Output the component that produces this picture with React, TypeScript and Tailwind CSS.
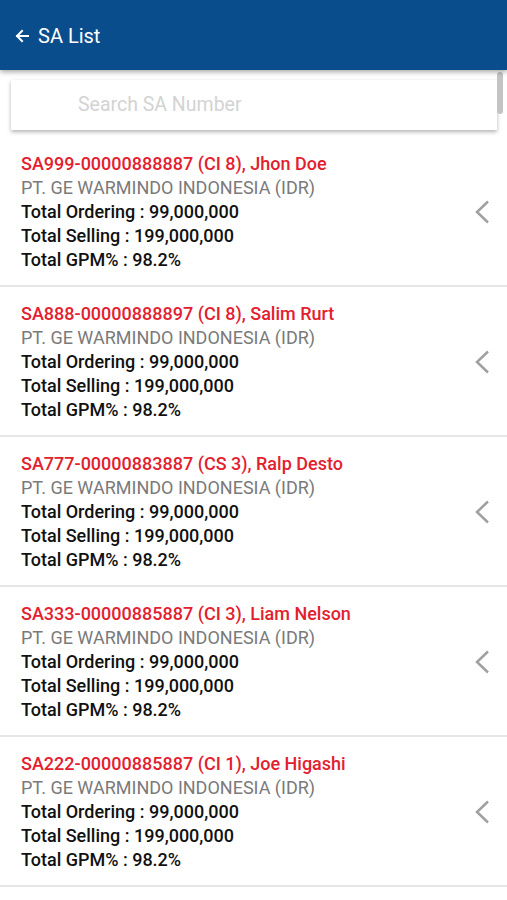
import React from "react";

const items = [
  { id: "SA999-00000888887 (CI 8), Jhon Doe" },
  { id: "SA888-00000888897 (CI 8), Salim Rurt" },
  { id: "SA777-00000883887 (CS 3), Ralp Desto" },
  { id: "SA333-00000885887 (CI 3), Liam Nelson" },
  { id: "SA222-00000885887 (CI 1), Joe Higashi" },
];

export default function App() {
  return (
    <div
      className="relative w-[507px] h-[900px] overflow-hidden bg-white"
      style={{ fontFamily: "Roboto, 'Liberation Sans', sans-serif" }}
    >
      <div className="relative z-10 h-[70px] bg-[#0a4d8d] flex items-center pl-[14px] shadow-[0_2px_5px_rgba(0,0,0,0.35)]">
        <svg width="16" height="16" viewBox="0 0 16 16" className="mt-[1px]">
          <path d="M14 8H3M8 3L3 8l5 5" fill="none" stroke="#fff" strokeWidth="2" strokeLinecap="square" />
        </svg>
        <span className="ml-[8px] text-white text-[20px] leading-none mt-[1px]">SA List</span>
      </div>

      <div className="absolute right-[4px] top-[72px] w-[6px] h-[42px] rounded-full bg-[#c4c4c4]" />

      <div className="px-[11px] pt-[10px]">
        <div className="h-[50px] w-[486px] bg-white shadow-[0_2px_4px_rgba(0,0,0,0.3)] flex items-center pl-[67px]">
          <span className="text-[19.5px] text-[#d3d3d3] mt-[-1px]">Search SA Number</span>
        </div>
      </div>

      <div className="mt-[7px]">
        {items.map((it, i) => (
          <div
            key={i}
            className="flex items-center border-b-2 border-[#e6e6e6] pl-[21px] pr-[17px] pt-[15px] pb-[13px]"
          >
            <div className="flex-1 text-[18px] leading-[24px]">
              <div className="font-medium text-[#e3202e]">{it.id}</div>
              <div className="text-[#7a7a7a]">PT. GE WARMINDO INDONESIA (IDR)</div>
              <div className="font-medium text-[#111]">Total Ordering : 99,000,000</div>
              <div className="font-medium text-[#111]">Total Selling : 199,000,000</div>
              <div className="font-medium text-[#111]">Total GPM% : 98.2%</div>
            </div>
            <svg width="16" height="24" viewBox="0 0 16 24">
              <path d="M14 1.5L3 12l11 10.5" fill="none" stroke="#a0a0a0" strokeWidth="2.5" />
            </svg>
          </div>
        ))}
      </div>
    </div>
  );
}
